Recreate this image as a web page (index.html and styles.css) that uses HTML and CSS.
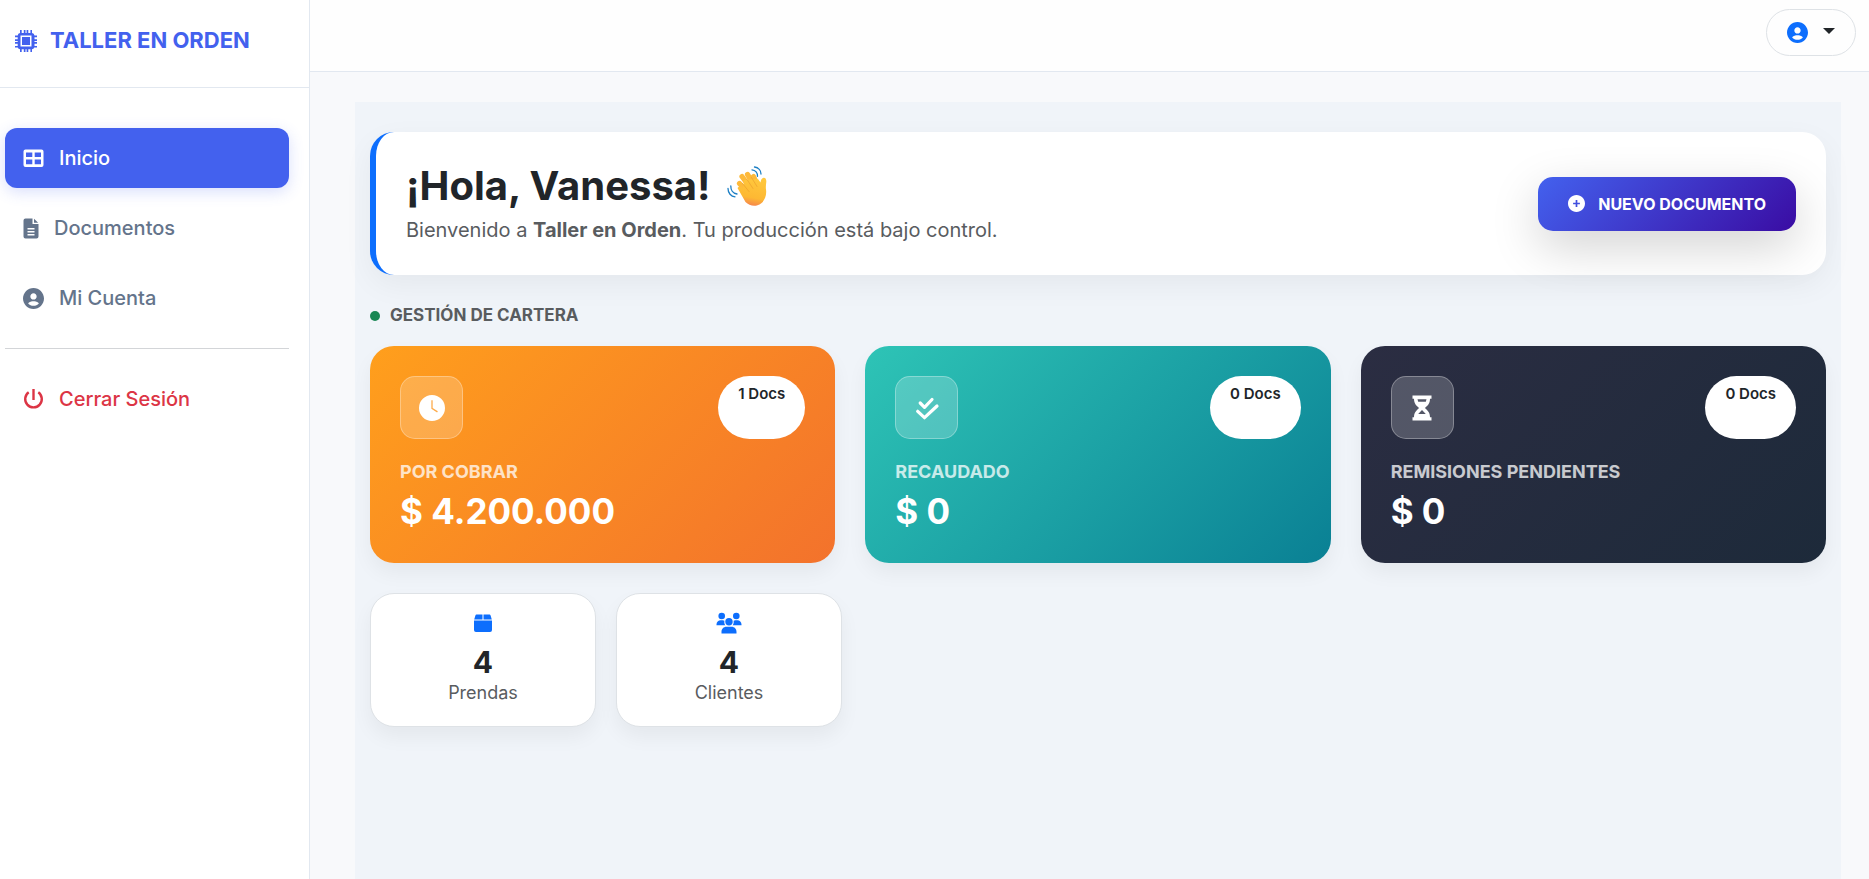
FILE: index.html
```html
<!DOCTYPE html>
<html lang="es">
<head>
<meta charset="utf-8">
<meta name="viewport" content="width=device-width, initial-scale=1">
<title>Taller en Orden</title>
<link rel="stylesheet" href="styles.css">
</head>
<body>
<div class="app">
  <aside class="sidebar">
    <a class="brand" href="#">
      <svg class="brand-icon" viewBox="0 0 22 22" aria-hidden="true"><path fill="currentColor" fill-rule="evenodd" d="M5 0h1.700v3h2.100V0h1.700v3h1.100V0h1.700v3h2.100V0H17v3a3 3 0 0 1 2.500 2.500H22v1.700h-2.500v2.100H22V11h-2.500v1.100H22v1.700h-2.500v2.100H22v1.600h-2.700A3 3 0 0 1 17 19.300V22h-1.600v-2.700h-2.100V22h-1.700v-2.700h-1.100V22H8.800v-2.700H6.700V22H5v-2.700a3 3 0 0 1-2.300-1.800H0v-1.600h2.700v-2.100H0v-1.700h2.700V11H0V9.300h2.700V7.200H0V5.500h2.700A3 3 0 0 1 5 3zM5.500 5.500v11h11v-11z"/><path fill="currentColor" d="M7 7h8v8H7z"/></svg>
      <span>TALLER EN ORDEN</span>
    </a>
    <nav class="menu">
      <a class="menu-link active" href="#">
        <svg class="icon-21" viewBox="0 0 21 21" aria-hidden="true"><path fill="currentColor" fill-rule="evenodd" d="M2.500 1.500h16a2 2 0 0 1 2 2v13.500a2 2 0 0 1-2 2h-16a2 2 0 0 1-2-2V3.500a2 2 0 0 1 2-2zM3 4.500v4.500h6.300V4.500zm8.700 0v4.500H18V4.500zM3 11.500v4.700h6.300v-4.700zm8.700 0v4.700H18v-4.700z"/></svg>
        <span>Inicio</span>
      </a>
      <a class="menu-link" href="#">
        <svg class="icon-16" viewBox="0 0 16 21" aria-hidden="true"><path fill="currentColor" fill-rule="evenodd" d="M2.500.500H9.500V6h6v12.500a2 2 0 0 1-2 2h-11a2 2 0 0 1-2-2v-16a2 2 0 0 1 2-2zM4.500 10v1.500h7V10zm0 3v1.500h7V13zm0 3v1.500h7V16z"/><path fill="currentColor" d="M11 .800 15.200 4.800H11z"/></svg>
        <span>Documentos</span>
      </a>
      <a class="menu-link" href="#">
        <svg class="icon-21" viewBox="2 2 20 20" aria-hidden="true"><path fill="currentColor" d="M12 2C6.579 2 2 6.579 2 12s4.579 10 10 10 10-4.579 10-10S17.421 2 12 2zm0 5c1.727 0 3 1.272 3 3s-1.273 3-3 3c-1.726 0-3-1.272-3-3s1.274-3 3-3zm-5.106 9.772c.897-1.320 2.393-2.200 4.106-2.200h2c1.714 0 3.209.880 4.106 2.200C15.828 18.140 14.015 19 12 19s-3.828-.860-5.106-2.228z"/></svg>
        <span>Mi Cuenta</span>
      </a>
      <hr class="menu-rule">
      <a class="menu-link danger" href="#">
        <svg class="icon-21" viewBox="0 0 21 21" aria-hidden="true"><g fill="none" stroke="currentColor" stroke-width="2.400"><path d="M10.500 0v11"/><path d="M5.700 3.300A8.300 8.300 0 1 0 15.300 3.300"/></g></svg>
        <span>Cerrar Sesión</span>
      </a>
    </nav>
  </aside>

  <div class="page">
    <header class="topbar">
      <button class="user-button" type="button" aria-label="Cuenta de usuario">
        <svg class="icon-21" viewBox="2 2 20 20" aria-hidden="true"><path fill="currentColor" d="M12 2C6.579 2 2 6.579 2 12s4.579 10 10 10 10-4.579 10-10S17.421 2 12 2zm0 5c1.727 0 3 1.272 3 3s-1.273 3-3 3c-1.726 0-3-1.272-3-3s1.274-3 3-3zm-5.106 9.772c.897-1.320 2.393-2.200 4.106-2.200h2c1.714 0 3.209.880 4.106 2.200C15.828 18.140 14.015 19 12 19s-3.828-.860-5.106-2.228z"/></svg>
        <span class="caret"></span>
      </button>
    </header>

    <main class="panel">
      <section class="welcome">
        <div class="welcome-text">
          <h1 class="welcome-title">¡Hola, Vanessa!
            <svg class="wave" viewBox="0 0 40 40" role="img" aria-label="Mano saludando">
              <defs><linearGradient id="skin" x1=".6" y1="0" x2=".4" y2="1"><stop offset="0" stop-color="#ffc83d"/><stop offset=".7" stop-color="#fdb833"/><stop offset="1" stop-color="#f5824f"/></linearGradient></defs>
              <g stroke="#fdb93a" stroke-width="5.200" stroke-linecap="round" fill="none"><path d="M12.500 17.500 21 27"/><path d="M15 10.500 25 24"/><path d="M20.500 8.500 29 22"/><path d="M26.500 10.500 31 20"/></g>
              <path fill="url(#skin)" d="M10.500 22c1.500-2.200 4-1.200 5.500.300L17 14l14-1 2.500 3.500c.200-2.600 1.300-4.600 3.300-4.700 2 0 2.700 2 2.500 4.200-.300 2.400-.700 4.500-.300 7.500 1 7-2 13.500-8.500 15.800-4.600 1.500-9-.500-12-3.300z"/>
              <g stroke="#ea9a2c" stroke-width=".8" stroke-linecap="round" fill="none" opacity=".75"><path d="M15.500 17.500 22 25.500"/><path d="M20 13.500 26 22.500"/><path d="M24.500 11.500 30 20.500"/></g>
              <g stroke="#1c7fc4" stroke-width="1.300" stroke-linecap="round" fill="none"><path d="M27.500 1c4 .500 6.500 3.500 6.500 7"/><path d="M25 3.800c3.500.200 5.700 3 5.500 6.500"/><path d="M1 22.500c0 4.500 3 8 7 8.300"/><path d="M3.800 20c-.100 4 2.200 7.500 6.200 8"/></g>
            </svg>
          </h1>
          <p class="welcome-lead">Bienvenido a <strong>Taller en Orden</strong>. Tu producción está bajo control.</p>
        </div>
        <button class="new-button" type="button">
          <svg class="icon-17" viewBox="2 2 20 20" aria-hidden="true"><path fill="currentColor" d="M12 2C6.486 2 2 6.486 2 12s4.486 10 10 10 10-4.486 10-10S17.514 2 12 2zm4 11h-3v3h-2v-3H8v-2h3V8h2v3h3v2z"/></svg>
          <span>NUEVO DOCUMENTO</span>
        </button>
      </section>

      <h2 class="section-title"><span class="dot"></span>GESTIÓN DE CARTERA</h2>

      <section class="wallet">
        <article class="wallet-card orange">
          <div class="wallet-head">
            <span class="tile"><svg class="icon-26" viewBox="2 2 20 20" aria-hidden="true"><path fill="currentColor" fill-rule="evenodd" d="M12 2a10 10 0 1 0 0 20 10 10 0 0 0 0-20zM11.500 6H12.500V12l4 2.500-.600.900L11.500 12.600z"/></svg></span>
            <span class="badge">1 Docs</span>
          </div>
          <p class="wallet-label">POR COBRAR</p>
          <p class="wallet-value">$ 4.200.000</p>
        </article>
        <article class="wallet-card teal">
          <div class="wallet-head">
            <span class="tile"><svg class="icon-26" viewBox="0 0 26 26" aria-hidden="true"><g fill="none" stroke="currentColor" stroke-width="3.200" stroke-linecap="round" stroke-linejoin="round"><path d="M6.200 8l4.300 4.300L18 4.500"/><path d="M3.700 16.300 10.500 22.700 23 11"/></g></svg></span>
            <span class="badge">0 Docs</span>
          </div>
          <p class="wallet-label">RECAUDADO</p>
          <p class="wallet-value">$ 0</p>
        </article>
        <article class="wallet-card dark">
          <div class="wallet-head">
            <span class="tile"><svg class="icon-26" viewBox="0 0 26 26" aria-hidden="true"><path fill="currentColor" fill-rule="evenodd" d="M3.500.500h19v3.200h-1.500c0 5-2.500 7-5.200 9.300 2.700 2.300 5.200 4.300 5.200 9.300h1.500v3.200h-19v-3.200H5c0-5 2.500-7 5.200-9.300C7.500 10.700 5 8.700 5 3.700H3.500zM8.500 4.200l.700 2.600h7.600l.700-2.600zM13 15l-3.800 4h7.600z"/></svg></span>
            <span class="badge">0 Docs</span>
          </div>
          <p class="wallet-label">REMISIONES PENDIENTES</p>
          <p class="wallet-value">$ 0</p>
        </article>
      </section>

      <section class="stats">
        <article class="stat">
          <svg class="icon-24" viewBox="0 0 24 24" aria-hidden="true"><path fill="currentColor" d="M5.500 3.500h6v5H3.200L4.500 4.200a1 1 0 0 1 1-.700zM12.500 3.500h6a1 1 0 0 1 1 .700l1.300 4.300h-8.300zM3 9.500h18v9.500a2 2 0 0 1-2 2H5a2 2 0 0 1-2-2z"/></svg>
          <p class="stat-number">4</p>
          <p class="stat-label">Prendas</p>
        </article>
        <article class="stat">
          <svg class="icon-26" viewBox="0 0 26 24" aria-hidden="true"><g fill="currentColor"><circle cx="5.700" cy="5" r="3.300"/><circle cx="20.300" cy="5" r="3.300"/><circle cx="13" cy="10.800" r="3.700"/><path d="M.500 14.300v-.800c0-2.300 1.800-4.200 4.200-4.200h2c.600 0 1.200.200 1.700.400-.300 1.800 0 3.300.900 4.600zM25.500 14.300v-.800c0-2.300-1.800-4.200-4.200-4.200h-2c-.600 0-1.200.200-1.700.400.300 1.800 0 3.300-.900 4.600zM5.500 22.500V21c0-3 2-5.200 5-5.200h5c3 0 5 2.200 5 5.200v1.500z"/></g></svg>
          <p class="stat-number">4</p>
          <p class="stat-label">Clientes</p>
        </article>
      </section>
    </main>
  </div>
</div>
</body>
</html>
```

FILE: styles.css
```css
*,
*::before,
*::after {
  box-sizing: border-box;
}

body {
  margin: 0;
  background: #f8f9fb;
  color: #212529;
  font-family: Inter, "Liberation Sans", sans-serif;
  font-size: 18px;
  line-height: 27px;
}

h1,
h2,
p {
  margin: 0;
}

svg {
  display: block;
  flex: none;
}

a {
  color: inherit;
  text-decoration: none;
}

button {
  font: inherit;
  cursor: pointer;
}

.icon-16 { width: 16px; height: 21px; }
.icon-17 { width: 17px; height: 17px; }
.icon-21 { width: 21px; height: 21px; }
.icon-24 { width: 24px; height: 24px; }
.icon-26 { width: 26px; height: 26px; }

.app {
  display: flex;
  min-height: 100vh;
}

/* Sidebar */
.sidebar {
  flex: 0 0 310px;
  background: #fff;
  border-right: 1px solid #e2e8f0;
}

.brand {
  display: flex;
  align-items: center;
  gap: 13px;
  height: 88px;
  padding: 0 15px 6px;
  border-bottom: 1px solid #e2e8f0;
  color: #4361ee;
  font-size: 22px;
  font-weight: 700;
}

.brand-icon {
  width: 22px;
  height: 22px;
}

.menu {
  display: flex;
  flex-direction: column;
  gap: 10px;
  padding: 40px 20px 0 5px;
}

.menu-link {
  display: flex;
  align-items: center;
  gap: 15px;
  padding: 15px 18px;
  border-radius: 12px;
  color: #64748b;
  font-size: 20px;
  font-weight: 500;
  line-height: 30px;
}

.menu-link.active {
  background: #4361ee;
  color: #fff;
  box-shadow: 0 4px 15px rgba(67, 97, 238, 0.2);
}

.menu-link.danger {
  color: #dc3545;
}

.menu-rule {
  width: 100%;
  height: 1px;
  margin: 10px 0;
  border: 0;
  background: #d3d5d8;
}

/* Page */
.page {
  display: flex;
  flex: 1;
  flex-direction: column;
  min-width: 0;
}

.topbar {
  display: flex;
  align-items: flex-start;
  justify-content: flex-end;
  height: 72px;
  padding: 9px 13px;
  background: #fefefe;
  border-bottom: 1px solid #e2e8f0;
}

.user-button {
  display: flex;
  align-items: center;
  gap: 15px;
  height: 47px;
  padding: 0 20px;
  background: #fefefe;
  border: 1px solid #dee2e6;
  border-radius: 24px;
  color: #0d6efd;
}

.caret {
  margin-bottom: 3px;
  border: 6px solid transparent;
  border-top-color: #212529;
  border-bottom: 0;
}

.panel {
  flex: 1;
  margin: 30px 28px 0 45px;
  padding: 30px 15px;
  background: #f0f4f9;
}

/* Welcome card */
.welcome {
  display: flex;
  align-items: center;
  justify-content: space-between;
  gap: 30px;
  padding: 30px;
  background: #fff;
  border-left: 6px solid #0d6efd;
  border-radius: 24px;
  box-shadow: 0 10px 30px rgba(0, 0, 0, 0.05);
}

.welcome-title {
  display: flex;
  align-items: center;
  gap: 16px;
  margin-bottom: 5px;
  font-size: 40px;
  font-weight: 700;
  line-height: 48px;
}

.wave {
  width: 40px;
  height: 40px;
}

.welcome-lead {
  color: #595c5f;
  font-size: 20px;
  line-height: 30px;
}

.new-button {
  display: flex;
  flex: none;
  align-items: center;
  gap: 13px;
  height: 54px;
  padding: 0 30px;
  background: linear-gradient(135deg, #4361ee, #3a0ca3);
  border: 0;
  border-radius: 15px;
  box-shadow: 0 16px 48px rgba(0, 0, 0, 0.175);
  color: #fff;
  font-size: 16px;
  font-weight: 700;
  line-height: 24px;
}

.section-title {
  display: flex;
  align-items: center;
  gap: 10px;
  margin: 27px 0 17px;
  color: #595c5f;
  font-size: 17px;
  font-weight: 700;
  line-height: 27px;
}

.dot {
  width: 10px;
  height: 10px;
  background: #198754;
  border-radius: 50%;
}

/* Wallet cards */
.wallet {
  display: grid;
  grid-template-columns: repeat(3, 1fr);
  gap: 30px;
}

.wallet-card {
  padding: 30px;
  border-radius: 24px;
  box-shadow: 0 10px 20px rgba(0, 0, 0, 0.05);
  color: #fff;
}

.orange { background: linear-gradient(135deg, #ff9f1c, #f3722c); }
.teal { background: linear-gradient(135deg, #2ec4b6, #0a8094); }
.dark { background: linear-gradient(135deg, #2b2d42, #1d2a3a); }

.wallet-head {
  display: flex;
  justify-content: space-between;
  margin-bottom: 19px;
}

.tile {
  display: grid;
  place-items: center;
  width: 63px;
  height: 63px;
  background: rgba(255, 255, 255, 0.2);
  border: 1px solid rgba(255, 255, 255, 0.3);
  border-radius: 15px;
}

.badge {
  padding: 10px 20px;
  background: #fff;
  border-radius: 32px;
  color: #212529;
  font-size: 15px;
  font-weight: 600;
  line-height: 15px;
}

.wallet-label {
  margin-bottom: 5px;
  font-weight: 700;
  opacity: 0.75;
}

.wallet-value {
  font-size: 35px;
  font-weight: 700;
  line-height: 43px;
}

/* Small counters */
.stats {
  display: grid;
  grid-template-columns: repeat(6, 1fr);
  gap: 20px;
  margin-top: 30px;
}

.stat {
  display: flex;
  flex-direction: column;
  align-items: center;
  padding: 16px 18px 20px;
  background: #fff;
  border: 1px solid #dee2e6;
  border-radius: 24px;
  box-shadow: 0 10px 20px rgba(0, 0, 0, 0.05);
  color: #0d6efd;
}

.stat svg {
  height: 26px;
}

.stat-number {
  margin-top: 8px;
  color: #212529;
  font-size: 30px;
  font-weight: 700;
  line-height: 36px;
}

.stat-label {
  color: #595c5f;
  line-height: 26px;
}
```
